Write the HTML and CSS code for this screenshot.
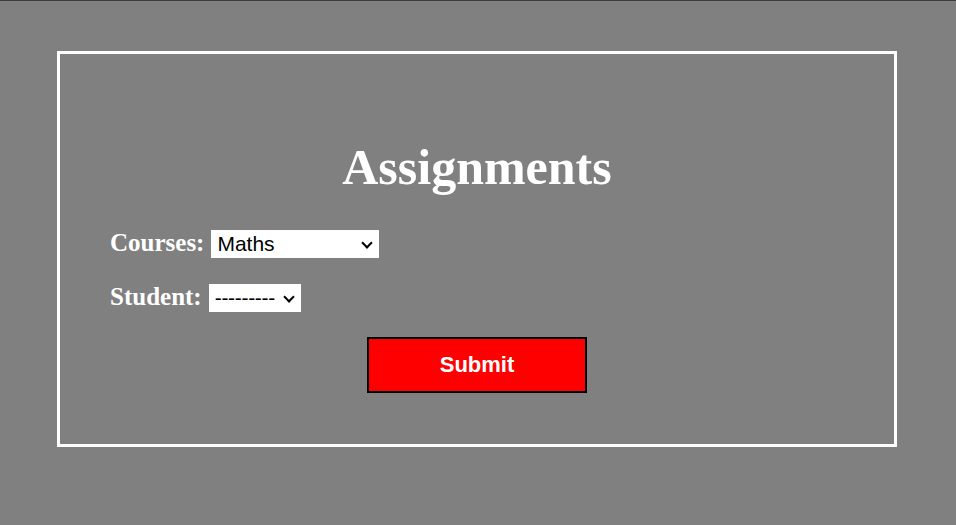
FILE: index.html
```html
<!DOCTYPE html>
<html lang="en">
<head>
<meta charset="utf-8">
<title>Assignments</title>
<link rel="stylesheet" href="styles.css">
</head>
<body>
<div class="page">
  <form class="panel">
    <h1 class="title">Assignments</h1>
    <div class="row">
      <label class="label" for="course">Courses:</label>
      <span class="select-wrap">
        <select class="select select-course" id="course">
          <option>Maths</option>
        </select>
      </span>
    </div>
    <div class="row">
      <label class="label" for="student">Student:</label>
      <span class="select-wrap">
        <select class="select select-student" id="student">
          <option>---------</option>
        </select>
      </span>
    </div>
    <button class="submit" type="button">Submit</button>
  </form>
</div>
</body>
</html>
```
FILE: styles.css
```css
html, body {
  margin: 0;
  padding: 0;
  background: #808080;
}

.page {
  border-top: 1px solid #3a3a3a;
  height: 524px;
  box-sizing: border-box;
  font-family: "Liberation Serif", "Times New Roman", serif;
}

.panel {
  box-sizing: border-box;
  width: 840px;
  height: 396px;
  margin: 50px 0 0 57px;
  border: 3px solid #ffffff;
  padding: 85px 50px 0 50px;
  display: flex;
  flex-direction: column;
}

.title {
  margin: 0;
  font-size: 50px;
  line-height: 57px;
  font-weight: bold;
  color: #ffffff;
  text-align: center;
}

.row {
  display: flex;
  align-items: flex-start;
  gap: 7px;
  margin-top: 34px;
}

.row + .row {
  margin-top: 26px;
}

.label {
  font-size: 25px;
  line-height: 26px;
  font-weight: bold;
  color: #ffffff;
}

.select-wrap {
  position: relative;
  display: block;
  height: 28px;
}

.select-wrap::after {
  content: "";
  position: absolute;
  right: 8px;
  top: 9px;
  width: 6px;
  height: 6px;
  border-right: 2px solid #000000;
  border-bottom: 2px solid #000000;
  transform: rotate(45deg);
  pointer-events: none;
}

.select {
  display: block;
  height: 28px;
  box-sizing: border-box;
  -webkit-appearance: none;
  appearance: none;
  border: none;
  border-radius: 0;
  background-color: #ffffff;
  color: #000000;
  font-family: "Liberation Sans", Arial, sans-serif;
  font-size: 21px;
  line-height: 28px;
  margin: 0;
  padding: 0 22px 0 6px;
}

.select-course {
  width: 168px;
}

.select-student {
  width: 92px;
  letter-spacing: -0.3px;
}

.submit {
  align-self: center;
  margin-top: 25px;
  width: 220px;
  height: 56px;
  box-sizing: border-box;
  background: #ff0000;
  border: 2px solid #000000;
  border-radius: 0;
  color: #ffffff;
  font-family: "Liberation Sans", Arial, sans-serif;
  font-size: 22px;
  font-weight: bold;
  padding: 0;
}
```
